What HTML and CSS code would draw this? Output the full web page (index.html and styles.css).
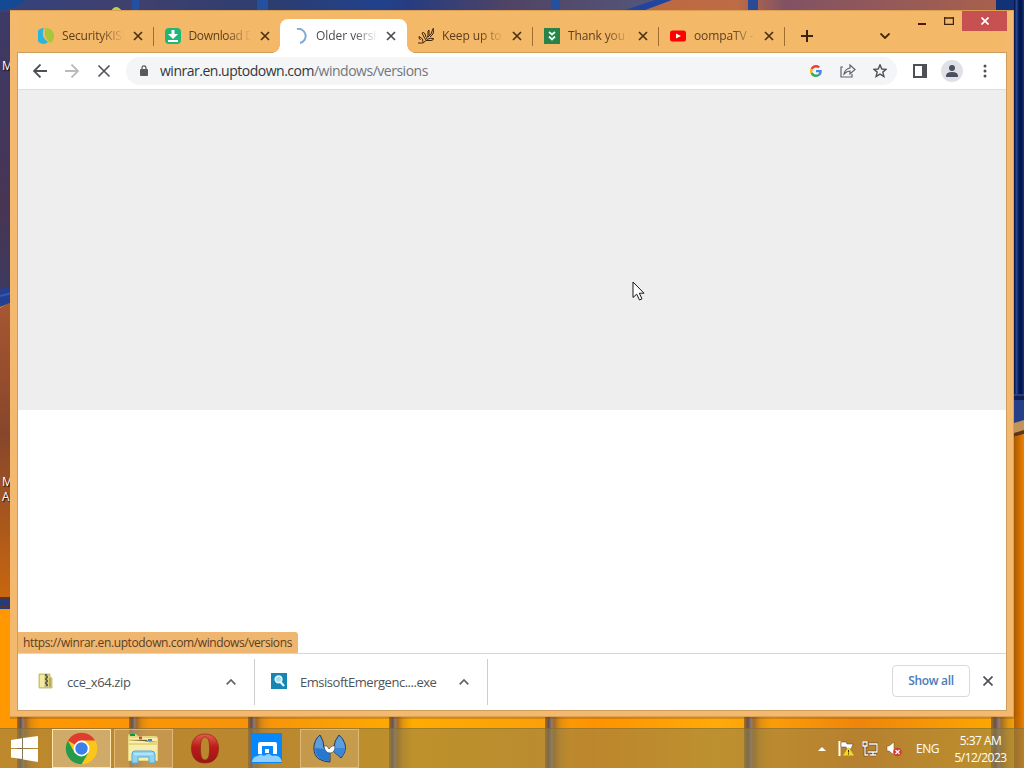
FILE: index.html
```html
<!DOCTYPE html>
<html lang="en">
<head>
<meta charset="utf-8">
<title>Older versions</title>
<link rel="stylesheet" href="styles.css">
</head>
<body>
<div class="desktop">
  <svg class="wallpaper" width="1024" height="768" viewBox="0 0 1024 768">
    <defs>
      <linearGradient id="lw" x2="0" y2="1"><stop offset="0" stop-color="#3b3a68"/><stop offset=".7" stop-color="#483553"/><stop offset="1" stop-color="#3b3b61"/></linearGradient>
      <linearGradient id="lo" x2="0" y2="1"><stop offset="0" stop-color="#a75732"/><stop offset=".45" stop-color="#87462b"/><stop offset="1" stop-color="#c96610"/></linearGradient>
      <linearGradient id="tp"><stop offset="0" stop-color="#34427d"/><stop offset=".13" stop-color="#40406d"/><stop offset=".27" stop-color="#2c3d70"/><stop offset=".37" stop-color="#21418c"/><stop offset=".4" stop-color="#273c80"/><stop offset=".5" stop-color="#514464"/><stop offset=".62" stop-color="#535478"/></linearGradient>
      <linearGradient id="to"><stop offset="0" stop-color="#bc6841"/><stop offset=".28" stop-color="#be6c45"/><stop offset=".4" stop-color="#815264"/><stop offset="1" stop-color="#ad6249"/></linearGradient>
      <linearGradient id="rb"><stop offset="0" stop-color="#001044"/><stop offset=".25" stop-color="#27468e"/><stop offset=".45" stop-color="#0b205f"/><stop offset=".7" stop-color="#001149"/><stop offset="1" stop-color="#17347d"/></linearGradient>
      <linearGradient id="ro"><stop offset="0" stop-color="#a95900"/><stop offset="1" stop-color="#ed8100"/></linearGradient>
      <linearGradient id="bot"><stop offset="0" stop-color="#ff9800"/><stop offset=".25" stop-color="#f79309"/><stop offset=".4" stop-color="#ffac00"/><stop offset=".53" stop-color="#faa00a"/><stop offset=".58" stop-color="#ff9200"/><stop offset=".7" stop-color="#ffab09"/><stop offset=".78" stop-color="#f89508"/><stop offset=".84" stop-color="#ef850a"/><stop offset="1" stop-color="#ffaf00"/></linearGradient>
      <linearGradient id="seam"><stop offset="0" stop-color="#56402e" stop-opacity=".5"/><stop offset=".14" stop-color="#55485a" stop-opacity=".9"/><stop offset=".26" stop-color="#85777d" stop-opacity=".9"/><stop offset=".36" stop-color="#80562f" stop-opacity=".7"/><stop offset=".6" stop-color="#b6771f" stop-opacity=".4"/><stop offset="1" stop-color="#d8810a" stop-opacity="0"/></linearGradient>
    </defs>
    <rect width="1024" height="768" fill="url(#bot)"/>
    <rect width="12" height="300" fill="url(#lw)"/>
    <path d="M0 308 12 301V598H0Z" fill="url(#lo)"/>
    <path d="M0 289 12 286V302L0 307Z" fill="#243e91"/><path d="M0 296 12 293" stroke="#3659ad" stroke-width="2"/>
    <path d="M0 597H12V609H0Z" fill="#263b7c"/><path d="M0 598H12M0 607H12" stroke="#55352f" stroke-width="2"/>
    <rect width="1024" height="12" fill="url(#tp)"/>
    <path d="M0 0H25Q17 9 0 10Z" fill="#154993"/><path d="M132 0H139V12H132ZM257 0H268V12H257ZM551 0H560V12H551Z" fill="#2450a0"/>
    <path d="M625 12 663 0H1024V12Z" fill="url(#to)"/><path d="M619 12 655 0H672L640 12Z" fill="#2045a0"/><path d="M748 0H758V12H748Z" fill="#294b96"/>
    <path d="M111 11Q116 3 122 11Z" fill="#bad344"/>
    <rect x="996" width="28" height="12" fill="#123278"/>
    <rect x="1014" width="10" height="404" fill="url(#rb)"/>
    <rect x="1014" y="394" width="10" height="29" fill="#253f88"/><path d="M1014 398H1024" stroke="#102053" stroke-width="4"/>
    <path d="M1014 423 1024 420V431L1014 434Z" fill="#c4935a"/><path d="M1014 433 1024 430V434L1014 437Z" fill="#60331e"/>
    <path d="M1014 437 1024 434V768H1014Z" fill="url(#ro)"/>
    <g fill="url(#seam)"><rect x="17" y="717" width="24" height="51"/><rect x="129" y="717" width="22" height="51"/><rect x="248" y="717" width="24" height="51"/><rect x="389" y="717" width="24" height="51"/><rect x="545" y="717" width="26" height="51"/><rect x="744" y="717" width="28" height="51"/><rect x="991" y="717" width="30" height="51"/></g>
    <path d="M10 718H1014" stroke="#754514" opacity=".55"/>
  </svg>
  <span class="desk-label label-top">M</span>
  <span class="desk-label label-low">M<br>A</span>

  <main class="window">
    <header class="titlebar">
      <nav class="tabs">
        <div class="tab"><svg class="fav" viewBox="0 0 16 16"><path d="M6 0A8 8 0 0 0 6 16Q8 16 10 14C4 10 4 5 6 0Z" fill="#2cb5dc"/><path d="M7.500 0A8 8 0 0 1 12 15C7 11 6 5 7.500 0Z" fill="#a7c63b"/></svg><span class="tab-name name-a">SecurityKISS</span><svg class="x" viewBox="0 0 10 10"><path d="M1 1 9 9M9 1 1 9"/></svg></div>
        <div class="tab"><svg class="fav" viewBox="0 0 16 16"><rect width="16" height="16" rx="4" fill="#21b675"/><path d="M6.500 2h3v4H13L8 11 3 6h3.500ZM3 12h10v2H3Z" fill="#fff"/></svg><span class="tab-name name-b">Download D</span><svg class="x" viewBox="0 0 10 10"><path d="M1 1 9 9M9 1 1 9"/></svg></div>
        <div class="tab active"><svg class="fav" viewBox="0 0 16 16"><path d="M5 1A7 7 0 0 1 8 15" fill="none" stroke="#7fa9d5" stroke-width="2"/></svg><span class="tab-name name-c">Older versions</span><svg class="x" viewBox="0 0 10 10"><path d="M1 1 9 9M9 1 1 9"/></svg></div>
        <div class="tab"><svg class="fav" viewBox="0 0 16 16"><g fill="none" stroke="#3b240d"><path d="M0 15H5L8 12.500H13Q16 12 15.500 10.500 12 9.500 9 11.500M5 14.500 4.500 11 1 8.500Q.5 10 2.500 12M8 12 6 9 4 5Q6 3.500 7 6L8 9M8 11 10 8V3L11 2V7M10 9 13 6 15 0.500 16 1 15 6 12 9"/></g></svg><span class="tab-name">Keep up to d</span><svg class="x" viewBox="0 0 10 10"><path d="M1 1 9 9M9 1 1 9"/></svg></div>
        <div class="tab"><svg class="fav" viewBox="0 0 16 16"><path fill="#278348" d="M0 0h16v16H0z"/><path d="M5 4 8 6.500 11 4M5 8.500 8 11.500 11 8.500" fill="none" stroke="#dffff0" stroke-width="1.800"/></svg><span class="tab-name">Thank you for</span><svg class="x" viewBox="0 0 10 10"><path d="M1 1 9 9M9 1 1 9"/></svg></div>
        <div class="tab"><svg class="fav" viewBox="0 0 16 16"><rect y="2.500" width="16" height="11" rx="2.500" fill="#f00"/><path d="M6 5.500 11 8 6 10.500Z" fill="#fff"/></svg><span class="tab-name">oompaTV - </span><svg class="x" viewBox="0 0 10 10"><path d="M1 1 9 9M9 1 1 9"/></svg></div>
      </nav>
      <svg class="new-tab" viewBox="0 0 12 12"><path d="M6 0V12M0 6H12"/></svg>
      <svg class="tab-search" viewBox="0 0 10 6"><path d="M.5.5 5 5 9.500.5"/></svg>
      <div class="controls">
        <span class="control"><svg width="8" height="3"><path d="M0 0H8V2H0Z" fill="#4d1608"/></svg></span>
        <span class="control max"><svg width="10" height="8"><path d="M.5 0V7.500H9.500V0M0 1H10" fill="none" stroke="#3d260d" stroke-width="1.500"/></svg></span>
        <span class="control close"><svg width="8" height="8"><path d="M.5.5 7.500 7.500M7.500.5.5 7.500" stroke="#fff" stroke-width="1.700"/></svg></span>
      </div>
    </header>

    <section class="client">
      <div class="toolbar">
        <svg class="nav" viewBox="0 0 14 14"><path d="M14 7H1M7.500.5 1 7 7.500 13.500"/></svg>
        <svg class="nav forward" viewBox="0 0 14 14"><path d="M0 7H13M6.500.5 13 7 6.500 13.500"/></svg>
        <svg class="nav stop" viewBox="0 0 14 14"><path d="M1.500 1.500 12.500 12.500M12.500 1.500 1.500 12.500"/></svg>
        <div class="omnibox">
          <svg class="lock" width="8" height="11" viewBox="0 0 8 11"><rect y="4" width="8" height="7" rx="1" fill="#56595d"/><path d="M2 5V3Q2 .8 4 .8T6 3V5" fill="none" stroke="#56595d" stroke-width="1.200"/></svg>
          <span class="url">winrar.en.uptodown.com<span class="path">/windows/versions</span></span>
          <svg class="google" width="12" height="12" viewBox="0 0 48 48"><path fill="#ea4335" d="M24 9.500c3.500 0 6.700 1.200 9.200 3.600l6.900-6.900C35.900 2.400 30.500 0 24 0 14.600 0 6.500 5.400 2.600 13.200l8 6.200C12.400 13.700 17.700 9.500 24 9.500z"/><path fill="#4285f4" d="M47 24.500c0-1.600-.1-3.100-.4-4.500H24v9h12.900c-.6 3-2.300 5.500-4.700 7.200l7.700 6C44.400 38 47 31.800 47 24.500z"/><path fill="#fbbc05" d="M10.500 28.600a14 14 0 0 1 0-9.200l-8-6.200a24 24 0 0 0 0 21.600z"/><path fill="#34a853" d="M24 48c6.500 0 11.900-2.100 15.900-5.800l-7.700-6c-6 4-18 2.300-21.700-7.600l-8 6.200C6.500 42.600 14.600 48 24 48z"/></svg>
          <svg class="share" width="16" height="14" viewBox="0 0 16 14"><path d="M3 3H1V13H12V10M4 10Q5 5 10 4V1L15 5.500 10 10V7Q7 7 4 10Z"/></svg>
          <svg class="star" width="14" height="14" viewBox="0 0 14 14"><path d="M7 .9 8.800 5 13.200 5.300 9.800 8.100 10.900 12.500 7 10.100 3.100 12.500 4.200 8.100.8 5.300 5.200 5Z"/></svg>
        </div>
        <svg class="panel" width="14" height="14"><path d="M0 0H14V14H0ZM2 2V12H9V2Z" fill="#4d5156" fill-rule="evenodd"/></svg>
        <svg class="profile" width="22" height="22"><circle cx="11" cy="11" r="11" fill="#dfe1e7"/><circle cx="11" cy="8" r="3" fill="#4a5060"/><path d="M5 16Q5 12 11 12T17 16V17H5Z" fill="#4a5060"/></svg>
        <svg class="dots" width="4" height="14"><circle cx="2" cy="2" r="1.500"/><circle cx="2" cy="7" r="1.500"/><circle cx="2" cy="12" r="1.500"/></svg>
      </div>
      <div class="page">
        <div class="ad-space"></div>
        <div class="status"><span>https://winrar.en.uptodown.com/windows/versions</span></div>
      </div>
      <footer class="shelf">
        <div class="download first">
          <svg width="16" height="16" viewBox="0 0 16 16"><path d="M1 1H12V4L14 5V15H1Z" fill="#ddd47d" stroke="#b1a957" stroke-width=".7"/><path d="M2 2H6V14H2Z" fill="#f1eb9f"/><path d="M7 1H10V14H7Z" fill="#b5b49b"/><path d="M7 2H9M8 4H10M7 6H9M8 8H10M7 10H9M8 12H10" stroke="#464431" stroke-width="1.300"/><path d="M12 5V14" stroke="#8f874c"/></svg>
          <span class="file">cce_x64.zip</span><svg class="up" viewBox="0 0 10 6"><path d="M.7 5.300 5 1 9.300 5.300"/></svg>
        </div>
        <div class="download second">
          <svg width="16" height="16" viewBox="0 0 16 16"><path d="M0 0H16V16H0Z" fill="#1685b2"/><circle cx="7.500" cy="6.300" r="3.300" fill="#a5dcef" stroke="#e2f6ff" stroke-width="1.600"/><path d="M9.500 9 13 13" stroke="#e2f6ff" stroke-width="2.300"/></svg>
          <span class="file file-long">EmsisoftEmergenc....exe</span><svg class="up" viewBox="0 0 10 6"><path d="M.7 5.300 5 1 9.300 5.300"/></svg>
        </div>
        <button class="show"><span>Show all</span></button>
        <svg class="shelf-close" viewBox="0 0 10 10"><path d="M.5.5 9.500 9.500M9.500.5.5 9.500"/></svg>
      </footer>
    </section>
  </main>

  <svg class="cursor" width="14" height="21" viewBox="0 0 14 21"><path d="M1 1V16.500L4.700 13.200 7.500 19 10 17.800 7.300 12.200H12Z" fill="#fff" stroke="#161616"/></svg>

  <footer class="taskbar">
    <div class="start"><svg width="27" height="26" viewBox="0 0 27 26"><path d="M0 4 11 2.300V12H0ZM12 2.100 27 0V12H12ZM0 13H11V23L0 21.500ZM12 13H27V26L12 23.500Z" fill="#fff"/></svg></div>
    <div class="task selected"><svg width="33" height="33" viewBox="0 0 48 48"><circle cx="24" cy="24" r="23" fill="#fbc51b"/><path d="M24 24 4.100 12.500A23 23 0 0 1 44 12.500H24Z" fill="#df3d31"/><path d="M4.100 12.500A23 23 0 0 0 24 47L34 30 24 24 14 30Z" fill="#249a4c"/><circle cx="24" cy="24" r="11.500" fill="#fff"/><circle cx="24" cy="24" r="9" fill="#3b7fe9"/></svg></div>
    <div class="task running"><svg width="32" height="31" viewBox="0 0 32 31"><path d="M1 3Q1 1 3 1H9L11 3H28Q31 3 31 6V28H1Z" fill="#e7d77e"/><path d="M2 5H30V27H2Z" fill="#f8edaa"/><path d="M3 2H8" stroke="#159343" stroke-width="2"/><path d="M12 5H15" stroke="#d84932" stroke-width="3"/><path d="M21 7H25" stroke="#328dbb" stroke-width="2"/><path d="M2 7H20L22 9H30M2 11H30" stroke="#d6bd58"/><path d="M5 30V21Q5 18 8 18H24Q28 18 28 21V30H22V24H11V30Z" fill="#8fd5f3" stroke="#5ba9d5"/><path d="M7 21H26" stroke="#d1f4ff"/></svg></div>
    <div class="task"><svg width="30" height="31" viewBox="0 0 30 31"><defs><linearGradient id="opera" x2="0" y2="1"><stop stop-color="#e65d4e"/><stop offset=".45" stop-color="#ba1c18"/><stop offset="1" stop-color="#9d1513"/></linearGradient></defs><path fill-rule="evenodd" fill="url(#opera)" stroke="#8d2619" stroke-width=".7" d="M15 1C24 1 28.500 7 28.500 15.500S24 30 15 30 1.500 24 1.500 15.500 6 1 15 1ZM15 4C11 4 10.500 10 10.500 15.500S11 27 15 27 19.500 21 19.500 15.500 19 4 15 4Z"/></svg></div>
    <div class="task"><svg width="30" height="30" viewBox="0 0 30 30"><path d="M0 0H30V30H0Z" fill="#0787fc"/><path d="M6 21V11Q6 9 8 9H23Q25 9 25 11V21H21V13H10V21Z" fill="#fff"/><path d="M13 16H17V20H13Z" fill="#fff"/><path d="M0 29Q1 23 6 23Q8 20 12 23Q17 19 20 23Q28 21 30 29Z" fill="#8fd0ff"/></svg></div>
    <div class="task running"><svg width="33" height="29" viewBox="0 0 33 29"><path d="M7 1C-1 7-1 21 6 25Q11 28 17 28V19L11 14Q11 7 7 1Z" fill="#5c9ddd" stroke="#263b5a"/><path d="M2 14 11 15 16 19V27Q3 27 2 14Z" fill="#2677d0"/><path d="M26 1Q21 7 21 13L20 17 28 24Q34 17 32 10 30 4 26 1Z" fill="#5c9ddd" stroke="#263b5a"/><path d="M21 14H32Q32 19 28 23L20 17Z" fill="#3c86d9"/><path d="M11 12H14L16 15 19 12H22Q22 19 17 19T11 12Z" fill="#fff" stroke="#33455e" stroke-width=".6"/></svg></div>
    <div class="tray">
      <svg width="8" height="5"><path d="M0 5 4 1 8 5Z" fill="#fff"/></svg>
      <svg width="16" height="17" viewBox="0 0 16 17"><path d="M1.500 1V16" stroke="#fff" stroke-width="2"/><path d="M3 2H8L9 4H15L13 9H9L8 7H3Z" fill="#fff" stroke="#5b4021" stroke-width=".5"/><path d="M10.500 7 16 15.500H5Z" fill="#f1da21"/><path d="M10.500 10V12.500M10.500 13.300V14.500" stroke="#35310a"/></svg>
      <svg width="16" height="16" viewBox="0 0 16 16"><path d="M7 3H15V11H6M8 14H14M11 11V14M3 5V14H6M1 1H5V5H1Z" fill="none" stroke="#4e371d" stroke-width="2.500"/><path d="M7 3H15V11H6M8 14H14M11 11V14M3 5V14H6M1 1H5V5H1Z" fill="none" stroke="#fff" stroke-width="1.300"/></svg>
      <svg width="16" height="16" viewBox="0 0 16 16"><path d="M1 5H3L8 1V14L3 10H1Z" fill="#fff" stroke="#6b4c24" stroke-width=".5"/><circle cx="11.500" cy="11" r="4.300" fill="#d53a34"/><path d="M9.500 9 13.500 13M13.500 9 9.500 13" stroke="#fff" stroke-width="1.300"/></svg>
      <span class="lang">ENG</span>
      <time class="clock"><span>5:37 AM</span><span>5/12/2023</span></time>
    </div>
  </footer>
</div>
</body>
</html>
```

FILE: styles.css
```css
*{box-sizing:border-box}
body{margin:0;overflow:hidden;font-family:"Open Sans","Noto Sans",sans-serif;font-size:12px;color:#3c4043}
svg{display:block;flex-shrink:0}
.desktop{position:relative;width:1024px;height:768px;overflow:hidden}
.wallpaper{position:absolute;inset:0}
.desk-label{position:absolute;left:2px;font-size:12px;line-height:15px;color:#fff;text-shadow:1px 1px 1px #000}
.label-top{top:58px}
.label-low{top:474px}
.window{position:absolute;left:10px;top:10px;width:1004px;height:707px;padding:0 7px 6px 8px;background:#f2b96f;border:1px solid #dca052;border-width:1px 1px 1px 0;display:flex;flex-direction:column}
.titlebar{height:42px;flex:none;display:flex;background:#f4b869}
.tabs{display:flex;padding:8px 0 0 9px;height:42px}
.tab{position:relative;width:126px;height:34px;padding-left:11px;display:flex;align-items:center;color:#5c3e1f}
.tab:nth-child(-n+2){width:126.5px}
.tab:not(.active)::after{content:"";position:absolute;right:0;top:8px;height:19px;width:1px;background:#a16e32}
.tab:nth-child(2)::after{display:none}
.tab.active{background:#fff;border-radius:8px 8px 0 0;width:127px;padding-left:12px;color:#4b4c4f}
.active::before,.active::after{content:"";position:absolute;bottom:0;width:8px;height:8px}
.active::before{left:-8px;background:radial-gradient(circle at 0 0,transparent 7.5px,#fff 8px)}
.active::after{right:-8px;background:radial-gradient(circle at 100% 0,transparent 7.5px,#fff 8px)}
.fav{width:16px;height:16px;margin-right:8px}
.tab-name{width:62px;white-space:nowrap;overflow:hidden;letter-spacing:-.12px;padding-bottom:1px;mask-image:linear-gradient(90deg,#000 62%,transparent)}
.name-a{letter-spacing:-.2px}
.name-b{letter-spacing:-.35px}
.name-c{letter-spacing:-.05px}
.x{width:10px;height:10px;margin-left:9px;fill:none;stroke:#4a3216;stroke-width:1.7}
.active .x{stroke:#4b4c4f;margin-left:8px}
.tab:nth-child(n+4) .x{margin-left:8px}
.new-tab{width:12px;height:12px;margin:19px 0 0 16px;fill:none;stroke:#3b240d;stroke-width:2}
.tab-search{width:10px;height:6px;margin:22px 0 0 67px;fill:none;stroke:#3b240d;stroke-width:1.8}
.controls{display:flex;margin-left:auto;margin-right:-1px}
.control{width:27px;height:20px;display:flex;align-items:center;justify-content:center}
.control:first-child{padding-top:6px}
.control.close{width:45px;background:#c75050}
.client{flex:1;min-height:0;display:flex;flex-direction:column;background:#fff;outline:1px solid #cf9d5d}
.toolbar{height:37px;flex:none;display:flex;align-items:center;padding-left:15px;border-bottom:1px solid #dedfe1}
.nav{width:14px;height:14px;margin-right:18px;fill:none;stroke:#4d5156;stroke-width:1.8}
.forward{stroke:#b9bbbd}
.stop{margin-right:15px;stroke-width:1.6}
.omnibox{width:771px;height:28px;border-radius:14px;background:#f3f5f7;display:flex;align-items:center;padding-left:14px}
.lock{margin-bottom:1px}
.url{margin-left:12px;width:650px;font-size:14px;line-height:20px;letter-spacing:-.49px;color:#34373a;white-space:nowrap}
.path{color:#73767a}
.share{margin-left:18px;fill:none;stroke:#5f6368;stroke-width:1.2}
.star{margin-left:17px;fill:none;stroke:#4d5156;stroke-width:1.4}
.panel{margin-left:16px}
.profile{margin-left:14px}
.dots{margin-left:20px;fill:#4d5156}
.page{height:563px;flex:none;position:relative}
.ad-space{height:320px;background:#eee}
.status{position:absolute;left:0;bottom:0;width:280px;height:21px;padding-left:5px;border-radius:0 3px 0 0;background:#efb66f;color:#5c3e1f;line-height:21px;white-space:nowrap;font-size:12px;letter-spacing:-.38px}
.shelf{flex:1;display:flex;align-items:center;padding-bottom:1px;border-top:1px solid #d5d6d8;color:#505356}
.download{height:46px;display:flex;align-items:center;border-right:1px solid #cbcdd0;font-size:13px}
.first{width:237px;padding-left:20px}
.second{width:233px;padding-left:16px}
.download>svg:first-child{margin-bottom:2px}
.file{margin-left:13px;width:159px;white-space:nowrap;letter-spacing:-.4px}
.file-long{letter-spacing:-.47px}
.up{width:10px;height:6px;fill:none;stroke:#5f6368;stroke-width:1.7}
.show{margin:0 0 2px auto;width:78px;height:32px;padding:0;border:1px solid #d7d9dc;border-radius:4px;background:#fff;font:600 12px "Open Sans",sans-serif;letter-spacing:-.3px;color:#4c7ab7}
.shelf-close{width:10px;height:10px;margin:0 13px 2px;fill:none;stroke:#4d5156;stroke-width:1.7}
.cursor{position:absolute;left:632px;top:281px}
.taskbar{position:absolute;left:0;right:0;bottom:0;height:40px;background:rgba(142,125,75,.58);border-top:1px solid rgba(128,97,41,.45);display:flex;align-items:center}
.start{width:52px;padding-left:11px}
.task{width:59px;height:39px;margin-right:3px;padding:0 1px 1px 0;display:flex;align-items:center;justify-content:center;border:1px solid transparent}
.selected{background:rgba(224,198,155,.55);border-color:#ffe5ac}
.running{background:rgba(219,186,141,.33);border-color:rgba(239,207,153,.6)}
.tray{margin-left:auto;display:flex;align-items:center;gap:8px;color:#fff;font-size:12px}
.tray>svg:first-child{margin-right:4px}
.lang{width:24px;margin-left:6px;letter-spacing:-.5px}
.clock{width:76px;padding-right:11px;display:flex;flex-direction:column;align-items:center;line-height:17px;letter-spacing:-.52px}
```
